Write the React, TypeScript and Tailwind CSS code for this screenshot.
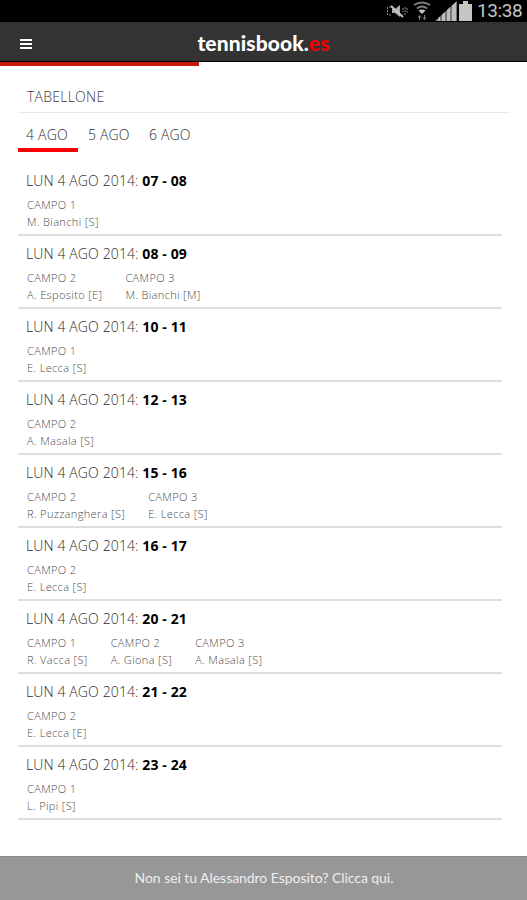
import React from 'react';

type Court = {
  name: string;
  player: string;
};

type Slot = {
  hours: string;
  courts: Court[];
};

const days = ['4 AGO', '5 AGO', '6 AGO'];

const slots: Slot[] = [
  { hours: '07 - 08', courts: [{ name: 'CAMPO 1', player: 'M. Bianchi [S]' }] },
  {
    hours: '08 - 09',
    courts: [
      { name: 'CAMPO 2', player: 'A. Esposito [E]' },
      { name: 'CAMPO 3', player: 'M. Bianchi [M]' },
    ],
  },
  { hours: '10 - 11', courts: [{ name: 'CAMPO 1', player: 'E. Lecca [S]' }] },
  { hours: '12 - 13', courts: [{ name: 'CAMPO 2', player: 'A. Masala [S]' }] },
  {
    hours: '15 - 16',
    courts: [
      { name: 'CAMPO 2', player: 'R. Puzzanghera [S]' },
      { name: 'CAMPO 3', player: 'E. Lecca [S]' },
    ],
  },
  { hours: '16 - 17', courts: [{ name: 'CAMPO 2', player: 'E. Lecca [S]' }] },
  {
    hours: '20 - 21',
    courts: [
      { name: 'CAMPO 1', player: 'R. Vacca [S]' },
      { name: 'CAMPO 2', player: 'A. Giona [S]' },
      { name: 'CAMPO 3', player: 'A. Masala [S]' },
    ],
  },
  { hours: '21 - 22', courts: [{ name: 'CAMPO 2', player: 'E. Lecca [E]' }] },
  { hours: '23 - 24', courts: [{ name: 'CAMPO 1', player: 'L. Pipi [S]' }] },
];

const StatusBar = () => (
  <div className="flex h-[22px] items-center justify-end bg-black pr-[4px] text-[#c4c4c4]">
    <svg width="22" height="16" viewBox="0 0 22 16" fill="none" stroke="currentColor">
      <path d="M6 6h3l5-4v12l-5-4H6z" fill="#aaa" stroke="none" />
      <path d="M5 3l12 11" strokeWidth="2" />
      <path d="M1.500 4v8M4 3v2M4 11v2M17 5v4M19 4v8M21 5v6" stroke="#888" strokeDasharray="2 1" />
    </svg>
    <svg className="ml-[5px]" width="18" height="20" viewBox="0 0 18 20" fill="none" stroke="#808080">
      <path d="M1 4q8-5 16 0M4 7.500q5-4 10 0" strokeWidth="2" />
      <path d="M5.500 9.500q3.500-2 7 0L9 13z" fill="#c4c4c4" stroke="none" />
      <path d="M6.500 19v-4M5 16.500l1.500-2 1.500 2M11.500 14v4M10 16.500l1.500 2 1.500-2" />
    </svg>
    <svg className="ml-[4px]" width="22" height="20" viewBox="0 0 22 20">
      <path d="M0 20L22 0v20z" fill="#777" />
      <path d="M3 20v-2.700l2-1.800V20zM7 20v-6.300l3-2.800V20zM12 20V9l3-2.700V20zM17 20V4.500L21 1v19z" fill="#bdbdbd" />
    </svg>
    <svg className="ml-[2px]" width="13" height="20" viewBox="0 0 13 20" fill="currentColor">
      <path d="M4 0h5v3h4v17H0V3h4z" />
    </svg>
    <span className="ml-[5px] w-[46px] whitespace-nowrap font-[Roboto] text-[19px] font-normal leading-[22px] tracking-[-0.4px]">
      13:38
    </span>
  </div>
);

const Header = () => (
  <header className="relative flex h-10 items-center justify-center border-b border-black bg-[#333] pt-[3px]">
    <button className="absolute left-5 top-[17px] flex h-[10px] w-3 flex-col justify-between" aria-label="Menu">
      <span className="h-[2px] w-full bg-white" />
      <span className="h-[2px] w-full bg-white" />
      <span className="h-[2px] w-full bg-white" />
    </button>
    <h1 className="font-[Lato] text-[21px] font-black leading-6 tracking-[0.1px] text-white">
      tennisbook.<span className="text-[#f00000]">es</span>
    </h1>
  </header>
);

const SlotRow = ({ hours, courts }: Slot) => (
  <li className="h-[73px] border-b-2 border-[#dedede] pl-[8px] pt-[8px]">
    <h2 className="text-[14px] leading-5 tracking-[0.12px] text-[#2c2c2c]">
      LUN 4 AGO 2014: <b className="font-bold text-black">{hours}</b>
    </h2>
    <div className="mt-[5px] flex gap-[23px] pl-px text-[11px] leading-[18px] tracking-[0.36px] text-[#4c4c4c]">
      {courts.map((court) => (
        <div key={court.name} className="whitespace-nowrap">
          <p>{court.name}</p>
          <p className="-mt-px">{court.player}</p>
        </div>
      ))}
    </div>
  </li>
);

export default function App() {
  return (
    <div className="flex h-[900px] w-[527px] flex-col overflow-hidden bg-white font-['Open_Sans',sans-serif] font-light">
      <StatusBar />
      <Header />
      <div className="h-1 w-[199px] bg-[#c91809]" />
      <main className="flex-1 pl-[18px] pr-[25px]">
        <div className="mr-[-8px] flex h-[47px] items-end border-b border-[#e8e8e8] pb-[5px] pl-[9px] text-[14px] leading-5 tracking-[0.25px] text-[#3c3c3c]">
          TABELLONE
        </div>
        <nav className="flex h-[39px] items-end">
          {days.map((day, i) => (
            <a
              key={day}
              className={
                i === 0
                  ? 'w-[60px] border-b-4 border-[#fa0000] pb-[3px] pl-[8px] text-[14px] leading-5 tracking-[0.2px] text-[#2c2c2c]'
                  : 'w-[61px] pb-[7px] pl-[10px] text-[14px] leading-5 tracking-[0.15px] text-[#2c2c2c]'
              }
            >
              {day}
            </a>
          ))}
        </nav>
        <ul className="mt-[11px]">
          {slots.map((slot) => (
            <SlotRow key={slot.hours} {...slot} />
          ))}
        </ul>
      </main>
      <footer className="flex h-11 items-center justify-center border-t border-[#888] bg-[#979797] pb-[2px] pl-px font-[Lato] text-[14px] font-normal tracking-[-0.05px] text-[#eee]">
        Non sei tu Alessandro Esposito? Clicca qui.
      </footer>
    </div>
  );
}
